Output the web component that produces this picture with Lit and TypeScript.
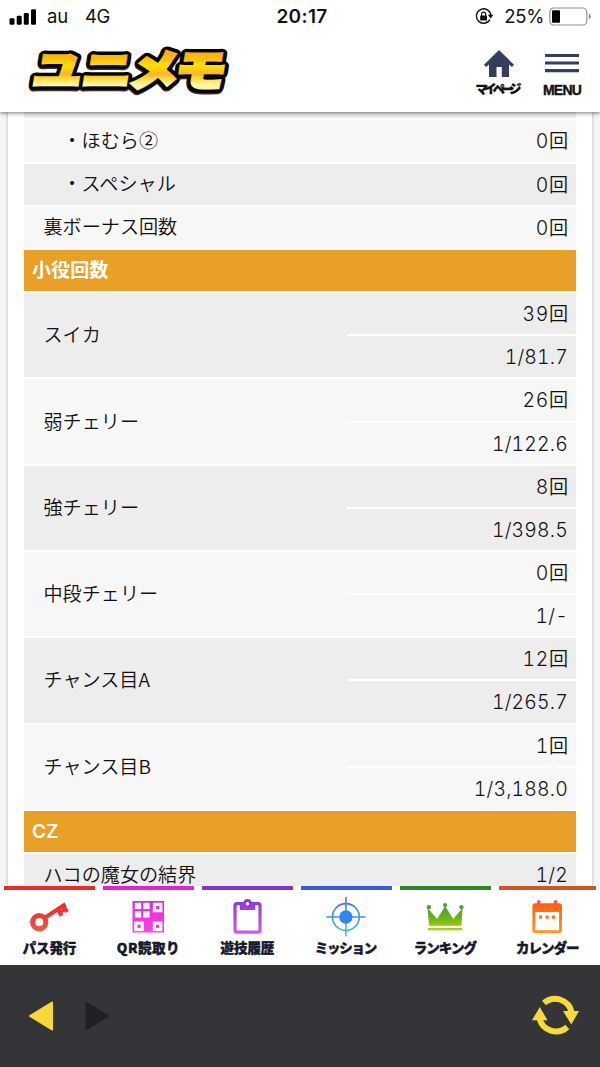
import { LitElement, html, svg, css } from "lit";
import { customElement } from "lit/decorators.js";

type Row = { kind: "single" | "head" | "pair"; label: string; values?: string[]; sub?: boolean; tone?: "a" | "b" };

const rows: Row[] = [
  { kind: "single", label: "・ほむら②", values: ["0回"], sub: true, tone: "b" },
  { kind: "single", label: "・スペシャル", values: ["0回"], sub: true, tone: "a" },
  { kind: "single", label: "裏ボーナス回数", values: ["0回"], tone: "b" },
  { kind: "head", label: "小役回数" },
  { kind: "pair", label: "スイカ", values: ["39回", "1/81.7"], tone: "a" },
  { kind: "pair", label: "弱チェリー", values: ["26回", "1/122.6"], tone: "b" },
  { kind: "pair", label: "強チェリー", values: ["8回", "1/398.5"], tone: "a" },
  { kind: "pair", label: "中段チェリー", values: ["0回", "1/-"], tone: "b" },
  { kind: "pair", label: "チャンス目A", values: ["12回", "1/265.7"], tone: "a" },
  { kind: "pair", label: "チャンス目B", values: ["1回", "1/3,188.0"], tone: "b" },
  { kind: "head", label: "CZ" },
  { kind: "single", label: "ハコの魔女の結界", values: ["1/2"], tone: "a" },
];

const keyIcon = svg`
  <g fill="none" stroke="url(#g-key)">
    <circle cx="35.2" cy="32.2" r="6.6" stroke-width="5"/>
    <path d="M40 28.2 L61.5 14.2" stroke-width="4"/>
    <path d="M53.3 18.5 L57.6 25.6 M59 15.5 L63 22" stroke-width="4"/>
    <path d="M56 22.6 L60.4 19.8" stroke-width="3"/>
  </g>
  <defs><linearGradient id="g-key" gradientUnits="userSpaceOnUse" x1="0" y1="12" x2="0" y2="42"><stop stop-color="#fb1f24"/><stop offset="1" stop-color="#f15646"/></linearGradient></defs>`;

const qrIcon = svg`
  <defs><linearGradient id="g-qr" x1="0" y1="0" x2="0" y2="1"><stop stop-color="#e922d5"/><stop offset="1" stop-color="#fb45e6"/></linearGradient></defs>
  <rect x="29.5" y="11" width="31.5" height="31.5" fill="url(#g-qr)"/>
  <g fill="#fff" transform="translate(.5 0)">
    <rect x="31.3" y="12.7" width="6.4" height="6.4"/><rect x="39.7" y="12.7" width="6.4" height="6.4"/>
    <rect x="31.3" y="21.2" width="6.4" height="6.4"/><rect x="39.7" y="21.2" width="6.4" height="6.4"/>
    <rect x="49.3" y="12.7" width="9.6" height="9.6"/>
    <rect x="30.7" y="31.5" width="9.6" height="9.6"/><rect x="49.3" y="31.5" width="9.6" height="9.6"/>
  </g>
  <g fill="#ef32dc" transform="translate(.5 0)">
    <rect x="52.5" y="15.9" width="3.2" height="3.2"/><rect x="33.9" y="34.7" width="3.2" height="3.2"/><rect x="52.5" y="34.7" width="3.2" height="3.2"/>
  </g>`;

const clipIcon = svg`
  <defs><linearGradient id="g-clip" gradientUnits="userSpaceOnUse" x1="0" y1="9" x2="0" y2="43"><stop stop-color="#8636df"/><stop offset="1" stop-color="#cf58ef"/></linearGradient></defs>
  <g transform="translate(.8 0)">
    <rect x="32.2" y="13.7" width="25" height="28.4" rx="2" fill="none" stroke="url(#g-clip)" stroke-width="3.2"/>
    <path d="M37 12.5 H40.5 A4.3 4.3 0 0 1 48.9 12.5 H52.5 V20 H37 Z" fill="url(#g-clip)"/>
    <circle cx="44.7" cy="13.7" r="1.7" fill="#fff"/>
  </g>`;

const targetIcon = svg`
  <defs><linearGradient id="g-tgt" gradientUnits="userSpaceOnUse" x1="0" y1="7" x2="0" y2="46"><stop stop-color="#3f70df"/><stop offset="1" stop-color="#42b6f5"/></linearGradient></defs>
  <g transform="translate(.7 0)">
    <g fill="none" stroke="url(#g-tgt)" stroke-width="1.5">
      <circle cx="44.2" cy="27" r="13.4" stroke-width="1.6"/>
      <path d="M44.2 7.3 h.01 V46.3 M24.7 27 H63.7 v.01"/>
    </g>
    <circle cx="44.2" cy="27" r="6.7" fill="#2d87f2"/>
  </g>`;

const crownIcon = svg`
  <defs><linearGradient id="g-crown" gradientUnits="userSpaceOnUse" x1="0" y1="13" x2="0" y2="40"><stop stop-color="#3f973c"/><stop offset=".5" stop-color="#67b019"/><stop offset="1" stop-color="#a9d611"/></linearGradient></defs>
  <g fill="url(#g-crown)" transform="translate(.6 0)">
    <path d="M28.3 35.8 L27 18 L36.5 29 L44.5 16 L52.6 29 L62 18 L60.8 35.8 Z"/>
    <circle cx="28.3" cy="17.2" r="2.1"/><circle cx="44.5" cy="15" r="2.1"/><circle cx="60.8" cy="17.2" r="2.1"/>
    <rect x="27.3" y="38" width="34.5" height="2.3"/>
  </g>`;

const calIcon = svg`
  <defs><linearGradient id="g-cal" gradientUnits="userSpaceOnUse" x1="0" y1="10" x2="0" y2="44"><stop stop-color="#ff5a0a"/><stop offset="1" stop-color="#ff9c20"/></linearGradient></defs>
  <path fill="url(#g-cal)" fill-rule="evenodd" d="M36 13.3 H60 Q63 13.3 63 16.3 V40.3 Q63 43.3 60 43.3 H36.4 Q33.4 43.3 33.4 40.3 V16.3 Q33.4 13.3 36.4 13.3 Z M36.3 22 V40.3 H60.1 V22 Z"/>
  <g fill="#f8574c"><rect x="38" y="10.2" width="3.4" height="5" rx="1"/><rect x="54.8" y="10.2" width="3.4" height="5" rx="1"/></g>
  <g fill="#f87830"><rect x="40" y="25.5" width="3.2" height="3.2"/><rect x="46.5" y="25.5" width="3.2" height="3.2"/><rect x="53" y="25.5" width="3.2" height="3.2"/></g>`;

const tabs = [
  { label: "パス発行", tone: "t1", icon: keyIcon },
  { label: "QR読取り", tone: "t2", icon: qrIcon },
  { label: "遊技履歴", tone: "t3", icon: clipIcon },
  { label: "ミッション", tone: "t4", icon: targetIcon },
  { label: "ランキング", tone: "t5", icon: crownIcon },
  { label: "カレンダー", tone: "t6", icon: calIcon },
];

@customElement("status-bar")
class StatusBar extends LitElement {
  static styles = css`
    :host { display: grid; grid-template-columns: 1fr auto 1fr; align-items: center; height: 33px; padding: 0 8px 0 9px; font: 400 18.5px/33px Inter, sans-serif; color: #111; }
    .left { display: flex; align-items: center; }
    .carrier { margin-left: 10px; letter-spacing: -0.2px; }
    .net { margin-left: 17px; letter-spacing: -0.4px; }
    .time { font-weight: 600; letter-spacing: 0.35px; font-size: 19px; margin-left: 3px; }
    .right { display: flex; align-items: center; justify-content: flex-end; }
    .pct { margin: 0 5px 0 10px; letter-spacing: -0.3px; }
    svg { display: block; }
  `;
  render() {
    return html`
      <div class="left">
        <svg width="28" height="18" viewBox="0 0 28 18"><g fill="#000"><rect x=".5" y="10.3" width="5" height="6.5" rx="1.3"/><rect x="7.7" y="7.7" width="5" height="9.1" rx="1.3"/><rect x="14.8" y="5" width="5" height="11.8" rx="1.3"/><rect x="22" y="1.2" width="5" height="15.6" rx="1.3"/></g></svg>
        <span class="carrier">au</span><span class="net">4G</span>
      </div>
      <span class="time">20:17</span>
      <div class="right">
        <svg width="19" height="17" viewBox="0 0 19 17"><path d="M14.9 11.7 A7.2 7.2 0 1 1 15.8 7" fill="none" stroke="#111" stroke-width="1.4"/><path d="M12.8 6.8 H18.4 L15.7 10.6 Z" fill="#111"/><rect x="5.2" y="7.6" width="6.8" height="5" rx=".6" fill="#111"/><path d="M6.6 8 V6.2 a2 2 0 0 1 4 0 V8" fill="none" stroke="#111" stroke-width="1.2"/></svg>
        <span class="pct">25%</span>
        <svg width="43" height="19" viewBox="0 0 43 19"><rect x=".8" y="1" width="37" height="17" rx="4" fill="#fff" stroke="#929292" stroke-width="1.2"/><rect x="3" y="3.3" width="8" height="12.4" rx="1" fill="#000"/><path d="M39.8 6.5 q2 .8 2 3 t-2 3 Z" fill="#8a8a8a"/></svg>
      </div>`;
  }
}

const logoGlyphs = [
  { ch: "ユ", x: 0, w: 49 },
  { ch: "ニ", x: 49, w: 50 },
  { ch: "メ", x: 96, w: 50 },
  { ch: "モ", x: 142, w: 51 },
];
const logoLayer = (cls: string) => svg`<g class=${cls}>${logoGlyphs.map(
  (g) => svg`<text x=${g.x} textLength=${g.w} lengthAdjust="spacingAndGlyphs">${g.ch}</text>`
)}</g>`;

@customElement("site-header")
class SiteHeader extends LitElement {
  static styles = css`
    :host { display: flex; height: 79px; box-sizing: border-box; padding: 0 17px 0 28px; justify-content: space-between; background: #fff; }
    svg { display: block; overflow: visible; }
    .logo { font: 900 43px "Noto Sans CJK JP", sans-serif; }
    .shade { stroke: #35323f; fill: #35323f; stroke-width: 9px; }
    .edge { stroke: #050505; fill: #050505; stroke-width: 10px; }
    .gold { stroke: url(#gold); fill: url(#gold); stroke-width: 3px; stroke-linejoin: miter; }
    .actions { display: flex; gap: 17px; padding-top: 12px; }
    .action { display: flex; flex-direction: column; align-items: center; color: #111; }
    .home { width: 50px; }
    .menu { width: 40px; }
    .cap { font: 900 12.5px/16px "Noto Sans CJK JP", sans-serif; white-space: nowrap; margin-top: 1px; }
    .home svg { margin-left: -5px; }
    .home .cap { letter-spacing: -4.1px; margin-left: -9px; -webkit-text-stroke: 0.3px #111; }
    .menu svg { margin-left: -2px; }
    .menu .cap { font: 700 14px/16px "Liberation Sans", sans-serif; letter-spacing: -0.8px; margin: 5px 0 0 -2px; -webkit-text-stroke: 0.4px #111; }
  `;
  render() {
    return html`
      <svg class="logo" width="204" height="79" viewBox="28 33 204 79">
        <defs><linearGradient id="gold" gradientUnits="userSpaceOnUse" x1="0" y1="-37" x2="0" y2="3"><stop stop-color="#f9a51b"/><stop offset=".22" stop-color="#fdb90c"/><stop offset=".42" stop-color="#ffe100"/><stop offset=".62" stop-color="#f8b52a"/><stop offset=".72" stop-color="#fdd62a"/><stop offset=".88" stop-color="#fff6a0"/></linearGradient></defs>
        <g transform="translate(31 86) skewX(-9)" stroke-linejoin="round">
          <g transform="translate(0 2)">${logoLayer("shade")}</g>
          ${logoLayer("edge")}
          ${logoLayer("gold")}
        </g>
      </svg>
      <div class="actions">
        <div class="action home">
          <svg width="30" height="35" viewBox="0 0 30 35"><path d="M15 5 L30 19.8 L28 22 L25 19.5 V32 H17.8 V22 H12.5 V32 H5 V19.5 L2 22 L0 19.8 Z" fill="#343e5e"/></svg>
          <span class="cap">マイページ</span>
        </div>
        <div class="action menu">
          <svg width="34" height="32" viewBox="0 0 34 32"><path d="M0 10.5 H34 M0 18 H34 M0 25.7 H34" stroke="#343e5e" stroke-width="3.2"/></svg>
          <span class="cap">MENU</span>
        </div>
      </div>`;
  }
}

@customElement("stats-table")
class StatsTable extends LitElement {
  static styles = css`
    :host { display: block; height: 774px; overflow: hidden; box-sizing: border-box; padding: 0 8px; background: #f5f5f5; font: 350 19.1px/40px "Noto Sans CJK JP", sans-serif; color: #111; }
    .card { height: 100%; box-sizing: border-box; padding: 0 16px; background: #fff; box-shadow: 0 0 3px rgba(0, 0, 0, 0.3); }
    .peek { height: 8.45px; box-sizing: border-box; border-bottom: 2px solid #fff; background: #ededed; }
    .row { display: grid; grid-template-columns: 323px 1fr; align-items: stretch; }
    .a { background: #ededed; }
    .b { background: #f7f7f7; }
    .label { display: flex; align-items: center; padding: 0 0 2px 19.5px; border-bottom: 2px solid #fff; white-space: nowrap; line-height: 24px; }
    .sub .label { padding-left: 38.5px; }
    .value { height: 43.17px; box-sizing: border-box; border-bottom: 2px solid #fff; padding-right: 8px; text-align: right; }
    .num { font: 300 19.4px/40px Inter, sans-serif; font-variant-numeric: tabular-nums; letter-spacing: 0.6px; }
    .ratio { letter-spacing: 0.2px; }
    .head { height: 43.17px; box-sizing: border-box; border-bottom: 2px solid #fff; padding-left: 8px; background: #e8a027; color: #fff; font-weight: 600; line-height: 41px; font-family: Inter, "Noto Sans CJK JP", sans-serif; }
  `;
  number(v: string) {
    return v.endsWith("回")
      ? html`<span class="num">${v.slice(0, -1)}</span>回`
      : html`<span class="num ratio">${v}</span>`;
  }
  render() {
    return html`<div class="card">
      <div class="peek"></div>
      ${rows.map((r) =>
        r.kind === "head"
          ? html`<div class="head">${r.label}</div>`
          : html`<div class="row ${r.tone} ${r.sub ? "sub" : ""}">
              <div class="label">${r.label}</div>
              <div>${r.values!.map((v) => html`<div class="value">${this.number(v)}</div>`)}</div>
            </div>`
      )}
    </div>`;
  }
}

@customElement("tab-bar")
class TabBar extends LitElement {
  static styles = css`
    :host { display: grid; grid-template-columns: repeat(5, 91px) 1fr; column-gap: 8px; height: 79px; box-sizing: border-box; padding: 0 4px 0 4.4px; background: #fff; }
    .tab { border-top: 4px solid; display: flex; flex-direction: column; align-items: center; }
    .icon { display: block; width: 91px; height: 47px; align-self: flex-start; }
    .label { font: 900 13.5px/20px "Noto Sans CJK JP", sans-serif; color: #14182b; letter-spacing: -0.1px; white-space: nowrap; margin-left: -1px; -webkit-text-stroke: 0.4px #14182b; }
    .t1 { border-color: #ed2a26; }
    .t2 { border-color: #e721d2; }
    .t3 { border-color: #8930db; }
    .t4 { border-color: #345ddd; }
    .t5 { border-color: #2f8a25; }
    .t6 { border-color: #d0561f; }
    .t2 .label { letter-spacing: 0.5px; }
    .t4 .label, .t5 .label, .t6 .label { letter-spacing: -1px; }
    .t4 .label { letter-spacing: -1.2px; margin-left: -3px; }
    .t5 .label { margin-left: -2px; }
  `;
  render() {
    return tabs.map((t) => html`<div class="tab ${t.tone}"><svg class="icon" viewBox="0 0 91 47">${t.icon}</svg><span class="label">${t.label}</span></div>`);
  }
}

@customElement("browser-bar")
class BrowserBar extends LitElement {
  static styles = css`
    :host { display: flex; justify-content: space-between; align-items: center; height: 102px; box-sizing: border-box; padding: 0 20px 0 28px; background: #343538; }
    svg { display: block; }
  `;
  render() {
    return html`
      <svg width="84" height="32" viewBox="0 0 84 32"><path d="M24 2.5 V29.5 L2 16 Z" fill="#f7d935" stroke="#f7d935" stroke-width="2" stroke-linejoin="round"/><path d="M58 2 V30 L81 16 Z" fill="#202122" stroke="#202122" stroke-width="1" stroke-linejoin="round"/></svg>
      <svg width="48" height="44" viewBox="0 0 48 44"><g fill="none" stroke="#f8d936" stroke-width="6"><path d="M12 9 A16.8 16.8 0 0 1 39.6 18.5"/><path d="M35.3 33 A16.8 16.8 0 0 1 7.5 24"/></g><path d="M31 17 H47 L39.3 30.5 Z M0 26.3 L7.8 13 L15.5 26.3 Z" fill="#f8d936"/></svg>`;
  }
}

@customElement("app-root")
class AppRoot extends LitElement {
  static styles = css`
    :host { display: flex; flex-direction: column; width: 600px; height: 1067px; overflow: hidden; background: #fff; }
    status-bar { z-index: 2; background: #fff; }
    site-header { box-shadow: 0 1px 4px rgba(0, 0, 0, 0.55); z-index: 1; }
  `;
  render() {
    return html`<status-bar></status-bar><site-header></site-header><stats-table></stats-table><tab-bar></tab-bar><browser-bar></browser-bar>`;
  }
}
